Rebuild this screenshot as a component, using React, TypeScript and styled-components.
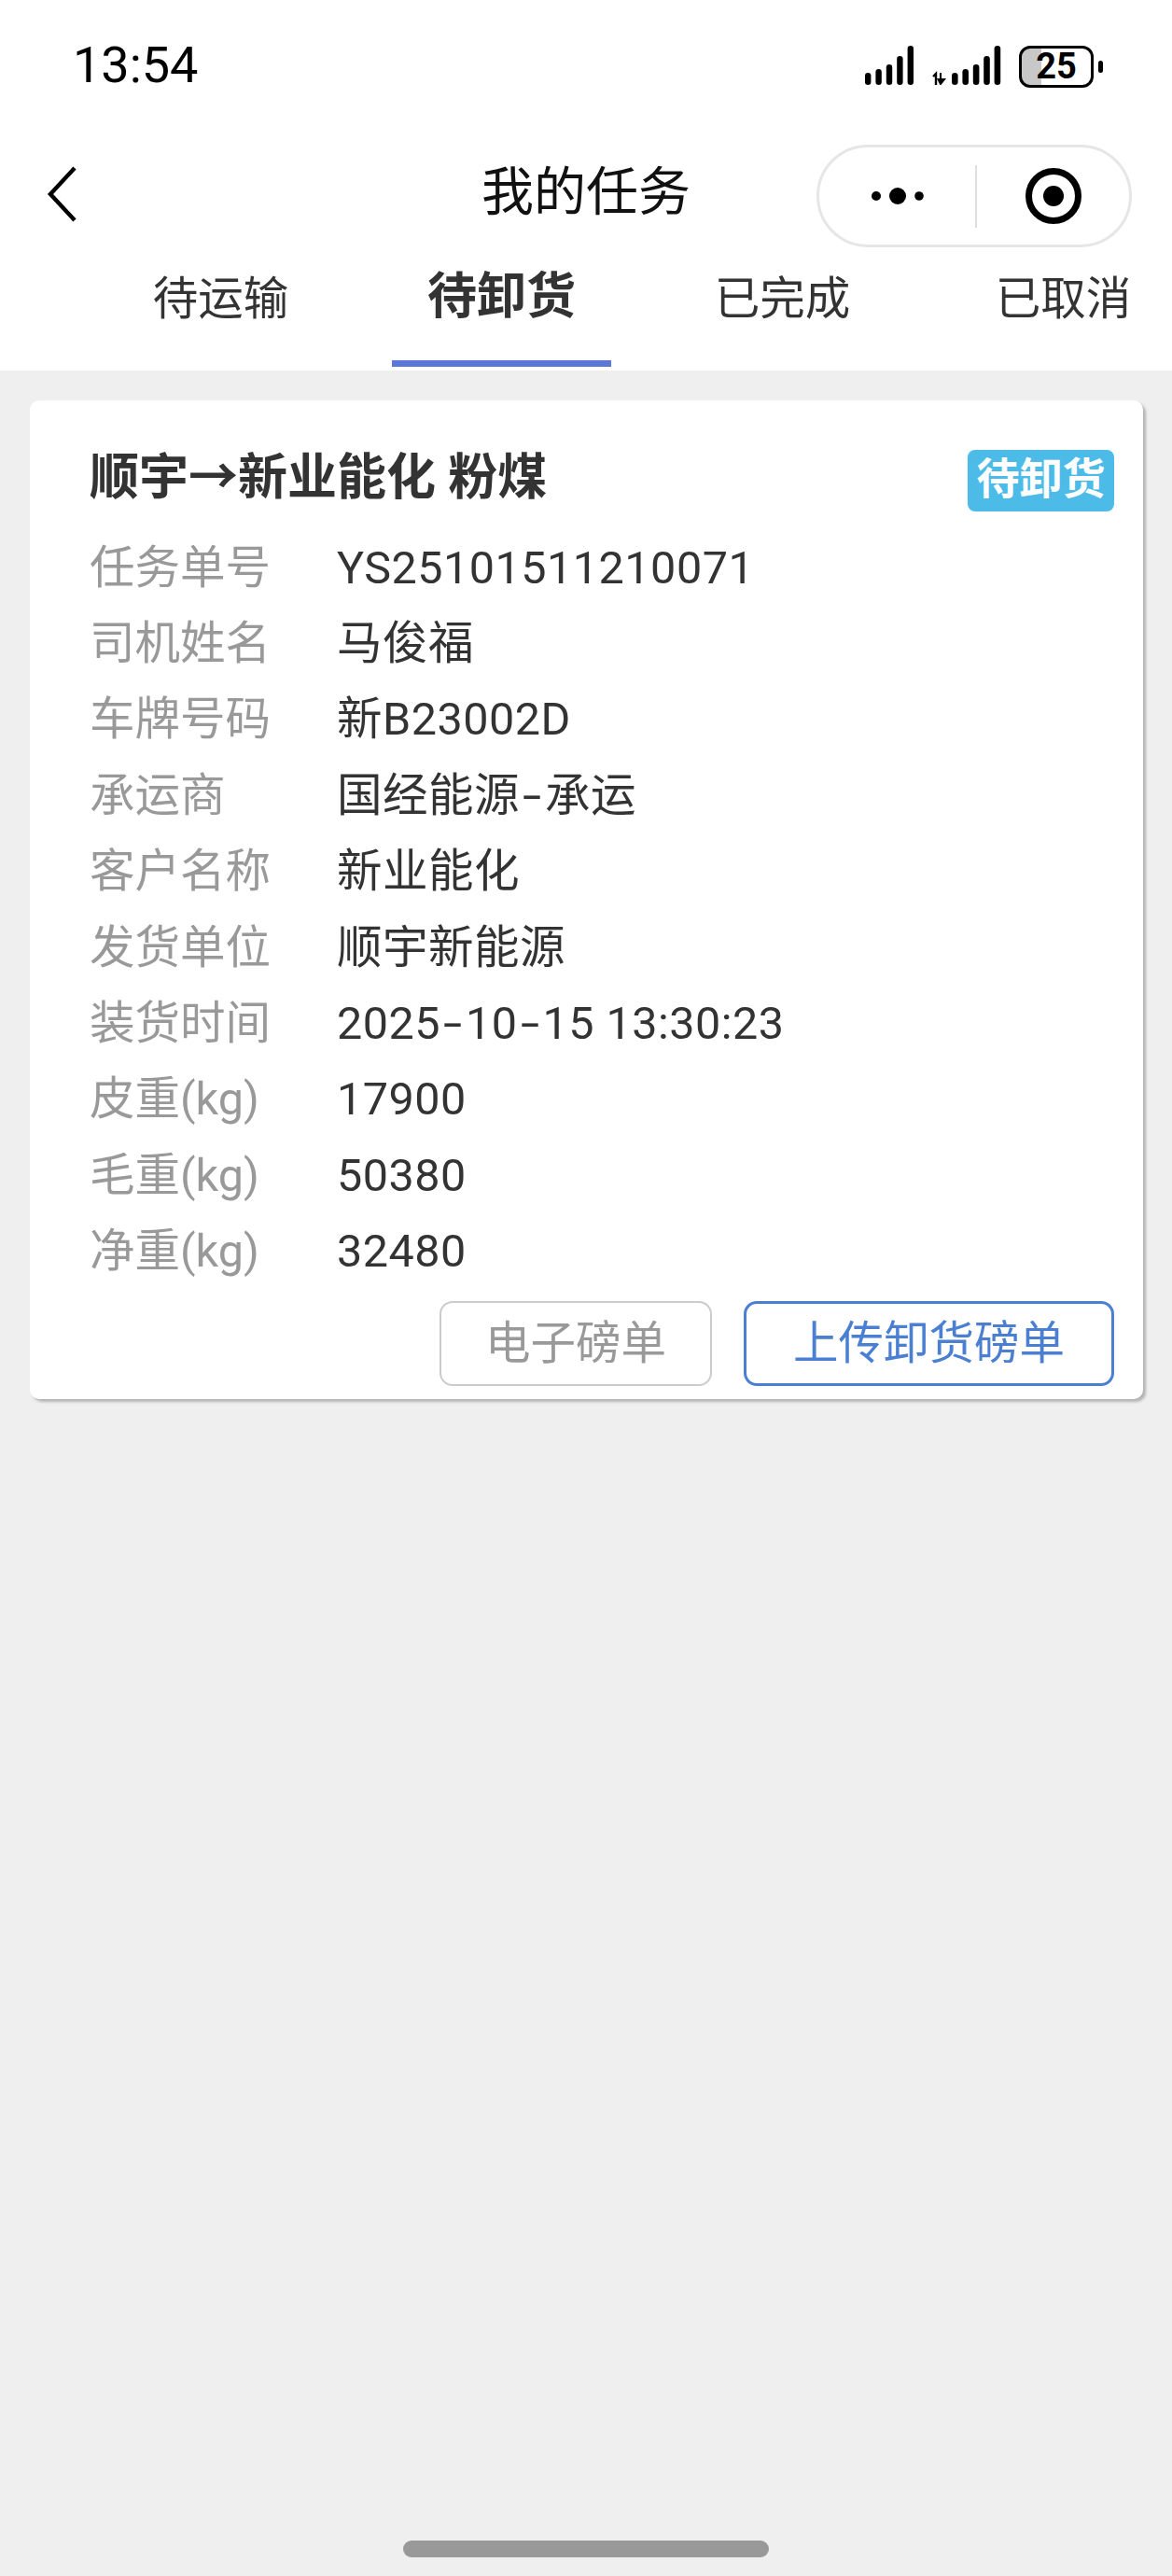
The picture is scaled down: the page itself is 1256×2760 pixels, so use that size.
import styled, { createGlobalStyle } from "styled-components";

const rows = [
  ["任务单号", "YS25101511210071"],
  ["司机姓名", "马俊福"],
  ["车牌号码", "新B23002D"],
  ["承运商", "国经能源-承运"],
  ["客户名称", "新业能化"],
  ["发货单位", "顺宇新能源"],
  ["装货时间", "2025-10-15 13:30:23"],
  ["皮重(kg)", "17900"],
  ["毛重(kg)", "50380"],
  ["净重(kg)", "32480"],
];

const tabs = ["待运输", "待卸货", "已完成", "已取消"];

function SignalBars() {
  const heights = [13, 17, 22, 31, 42];
  return (
    <svg width="53" height="42" viewBox="0 0 53 42">
      {heights.map((h, i) => (
        <rect key={i} x={i * 11.4} y={42 - h} width="6.4" height={h} rx="3.2" fill="#000" />
      ))}
    </svg>
  );
}

function DataSignalBars() {
  const heights = [13, 17, 22, 31, 42];
  return (
    <svg width="74" height="42" viewBox="0 0 74 42">
      <path d="M1 33l3-3v12M4 42V30" stroke="#000" strokeWidth="2.4" fill="none" />
      <path d="M9 29v9M6.5 36l2.5 5 4-5z" stroke="#000" strokeWidth="2" fill="#000" />
      {heights.map((h, i) => (
        <rect key={i} x={21 + i * 11.4} y={42 - h} width="6.6" height={h} rx="3.3" fill="#000" />
      ))}
    </svg>
  );
}

function ValueText({ text }: { text: string }) {
  const parts = text.split("-");
  return (
    <RowValue>
      {parts.map((part, i) => (
        <span key={i}>
          {i > 0 && <Hyphen>-</Hyphen>}
          {part}
        </span>
      ))}
    </RowValue>
  );
}

function App() {
  return (
    <Page>
      <GlobalStyle />
      <Top>
        <StatusBar>
          <Time>13:54</Time>
          <StatusIcons>
            <SignalBars />
            <DataSignalBars />
            <Battery>25</Battery>
          </StatusIcons>
        </StatusBar>
        <NavBar>
          <BackCell>
            <svg width="34" height="62" viewBox="0 0 34 62">
              <path d="M30 3 L4 31 L30 59" stroke="#000" strokeWidth="4.4" fill="none" />
            </svg>
          </BackCell>
          <NavTitle>我的任务</NavTitle>
          <CapsuleCell>
            <Capsule>
              <CapsulePart>
                <svg width="56" height="20" viewBox="0 0 56 20">
                  <circle cx="5" cy="10" r="5" fill="#000" />
                  <ellipse cx="28" cy="10" rx="9" ry="9" fill="#000" />
                  <circle cx="51" cy="10" r="4.8" fill="#000" />
                </svg>
              </CapsulePart>
              <CapsuleDivider />
              <CapsulePart>
                <svg width="60" height="60" viewBox="0 0 60 60">
                  <circle cx="30" cy="30" r="26.5" stroke="#000" strokeWidth="7" fill="none" />
                  <circle cx="30" cy="30" r="11" fill="#000" />
                </svg>
              </CapsulePart>
            </Capsule>
          </CapsuleCell>
        </NavBar>
        <TabBar>
          {tabs.map((tab) => (
            <Tab key={tab}>
              <TabLabel $active={tab === "待卸货"}>{tab}</TabLabel>
            </Tab>
          ))}
        </TabBar>
      </Top>
      <Card>
        <CardHead>
          <CardTitle>顺宇→新业能化 粉煤</CardTitle>
          <Badge>待卸货</Badge>
        </CardHead>
        {rows.map(([label, value]) => (
          <Row key={label}>
            <RowLabel>{label}</RowLabel>
            <ValueText text={value} />
          </Row>
        ))}
        <Actions>
          <ActionButton type="button">电子磅单</ActionButton>
          <ActionButton type="button" $primary>
            上传卸货磅单
          </ActionButton>
        </Actions>
      </Card>
      <HomeBar />
    </Page>
  );
}

const GlobalStyle = createGlobalStyle`
  body {
    margin: 0;
    background: #efefef;
    font-family: Roboto, "Noto Sans CJK SC", sans-serif;
  }
`;

const Page = styled.div`
  width: 1256px;
  height: 2760px;
  display: flex;
  flex-direction: column;
  overflow: hidden;
  background: #efefef;
`;

const Top = styled.div`
  background: #fff;
`;

const StatusBar = styled.div`
  height: 155px;
  box-sizing: border-box;
  padding: 40px 84px 0 78px;
  display: flex;
  justify-content: space-between;
  align-items: flex-start;
`;

const Time = styled.div`
  font-size: 54px;
  line-height: 60px;
  color: #000;
`;

const StatusIcons = styled.div`
  display: flex;
  align-items: flex-start;
  gap: 19px;
  padding-top: 9px;
`;

const Battery = styled.div`
  position: relative;
  width: 80px;
  height: 45px;
  box-sizing: border-box;
  border: 3.5px solid #000;
  border-radius: 12px;
  background: linear-gradient(to right, #c8c8c8 21px, #fff 21px);
  font-size: 38px;
  font-weight: 700;
  line-height: 38px;
  text-align: center;
  color: #000;

  &::after {
    content: "";
    position: absolute;
    right: -13px;
    top: 13px;
    width: 5px;
    height: 13px;
    border-radius: 3px;
    background: #000;
  }
`;

const NavBar = styled.div`
  height: 110px;
  display: grid;
  grid-template-columns: 1fr auto 1fr;
  align-items: center;
`;

const BackCell = styled.div`
  display: flex;
  padding: 0 0 5px 50px;
`;

const NavTitle = styled.div`
  font-size: 56px;
  line-height: 70px;
  margin-bottom: 8px;
  color: #111;
`;

const CapsuleCell = styled.div`
  display: flex;
  justify-content: flex-end;
  padding-right: 43px;
`;

const Capsule = styled.div`
  width: 338px;
  height: 110px;
  box-sizing: border-box;
  display: flex;
  align-items: center;
  border: 3px solid #e6e6e6;
  border-radius: 55px;
`;

const CapsulePart = styled.div`
  flex: 1;
  display: flex;
  justify-content: center;

  &:first-child {
    flex: 0 0 167px;
  }
`;

const CapsuleDivider = styled.div`
  width: 2px;
  height: 67px;
  background: #dedede;
`;

const TabBar = styled.div`
  height: 132px;
  display: flex;
  padding-left: 86px;
  overflow: hidden;
`;

const Tab = styled.div`
  flex: 0 0 301px;
  display: flex;
  justify-content: center;
`;

const TabLabel = styled.div<{ $active?: boolean }>`
  width: 235px;
  height: 128px;
  box-sizing: border-box;
  display: flex;
  align-items: center;
  justify-content: center;
  padding-bottom: ${({ $active }) => ($active ? "16px" : "10px")};
  border-bottom: 7px solid ${({ $active }) => ($active ? "#5b78d8" : "transparent")};
  font-size: ${({ $active }) => ($active ? "53px" : "48.5px")};
  font-weight: ${({ $active }) => ($active ? 700 : 400)};
  line-height: 60px;
  color: #333;
  white-space: nowrap;
`;

const Card = styled.div`
  margin: 32px 31px 0 32px;
  padding: 0 31px 14px 64px;
  background: #fff;
  border-radius: 10px;
  box-shadow: 3px 3px 3px #b4b4b4;
`;

const CardHead = styled.div`
  height: 137px;
  box-sizing: border-box;
  padding-top: 53px;
  display: flex;
  justify-content: space-between;
  align-items: flex-start;
`;

const CardTitle = styled.div`
  font-size: 53px;
  font-weight: 700;
  line-height: 60px;
  color: #333;
`;

const Badge = styled.div`
  width: 157px;
  height: 66px;
  border-radius: 8px;
  background: #4dbbe8;
  color: #fff;
  font-size: 46px;
  font-weight: 700;
  line-height: 62px;
  text-align: center;
`;

const Row = styled.div`
  height: 81.4px;
  box-sizing: border-box;
  padding-top: 4px;
  display: flex;
  align-items: center;
  font-size: 48.5px;
  line-height: 60px;
`;

const RowLabel = styled.div`
  width: 265px;
  color: #999;
`;

const RowValue = styled.div`
  color: #333;
  letter-spacing: 0.5px;
`;

const Hyphen = styled.span`
  display: inline-block;
  width: 27px;
  text-align: center;
  transform: scaleX(1.5);
`;

const Actions = styled.div`
  display: flex;
  justify-content: flex-end;
  gap: 34px;
  margin-top: 14px;
`;

const ActionButton = styled.button<{ $primary?: boolean }>`
  width: ${({ $primary }) => ($primary ? "397px" : "292px")};
  height: 91px;
  padding: 2px 0 0;
  background: #fff;
  border: ${({ $primary }) => ($primary ? "3px solid #4a7fd1" : "2px solid #cccccc")};
  border-radius: 14px;
  font-family: inherit;
  font-size: 48.5px;
  line-height: 60px;
  color: ${({ $primary }) => ($primary ? "#4a7fd1" : "#999")};
`;

const HomeBar = styled.div`
  width: 392px;
  height: 18px;
  margin: auto auto 20px;
  border-radius: 9px;
  background: #999;
`;

export default App;
